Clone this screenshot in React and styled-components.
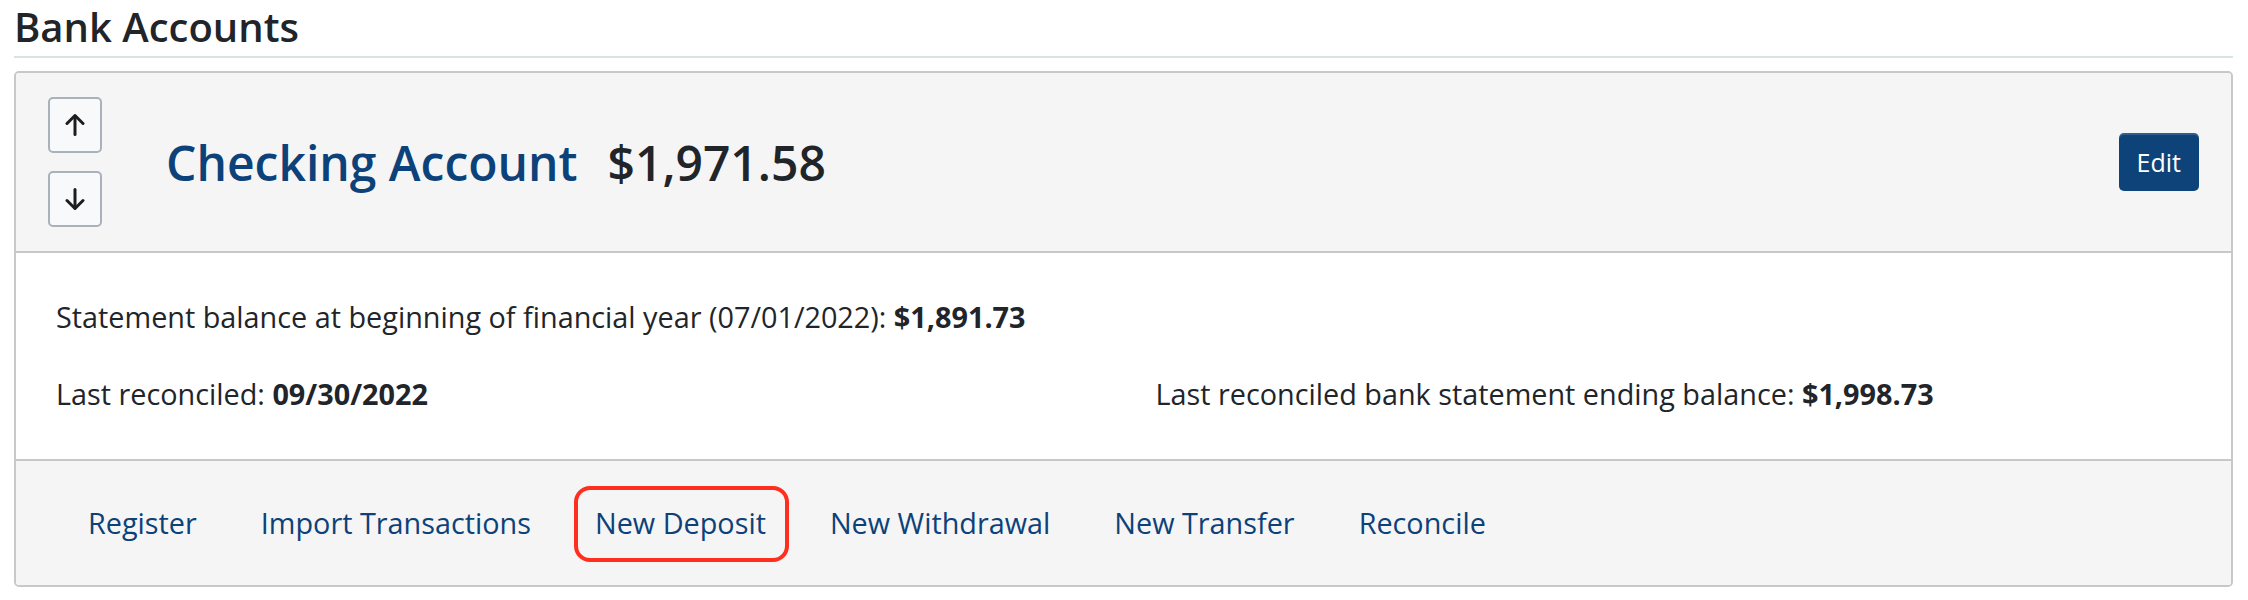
import styled, { createGlobalStyle } from "styled-components";

const Global = createGlobalStyle`
  body {
    margin: 0;
    background: #fff;
    font-family: "Open Sans", "Noto Sans", sans-serif;
    color: #212529;
  }
`;

const Page = styled.div`
  padding: 0 15px 0 14px;
`;

const Heading = styled.h2`
  margin: 0 0 13px 0;
  padding: 3px 0 5px 0;
  font-size: 40px;
  line-height: 48px;
  font-weight: 600;
  color: #212529;
  border-bottom: 2px solid #d6e6dd;
`;

const Card = styled.section`
  border: 2px solid #c8c8c8;
  border-radius: 5px;
  overflow: hidden;
`;

const Header = styled.div`
  display: flex;
  align-items: center;
  padding: 24px 32px 24px 32px;
  background: #f5f5f5;
  border-bottom: 2px solid #c8c8c8;
`;

const Movers = styled.div`
  display: flex;
  flex-direction: column;
  gap: 18px;
`;

const MoveButton = styled.button`
  width: 54px;
  height: 56px;
  display: flex;
  align-items: center;
  justify-content: center;
  padding: 0;
  background: #f8f9fa;
  border: 2px solid #a9b1ba;
  border-radius: 5px;
  color: #1b1e21;
  cursor: pointer;
`;

const Name = styled.a`
  margin-left: 64px;
  font-size: 48px;
  font-weight: 600;
  color: #0c4279;
  text-decoration: none;
`;

const Amount = styled.span`
  margin-left: 30px;
  font-size: 48px;
  font-weight: 600;
  color: #212529;
`;

const EditButton = styled.button`
  margin-left: auto;
  height: 58px;
  padding: 0 18px;
  display: inline-flex;
  align-items: center;
  background: #0e4379;
  color: #fff;
  border: none;
  border-radius: 5px;
  box-shadow: inset 0 2px 0 rgba(255, 255, 255, 0.15);
  font-family: inherit;
  font-size: 25px;
  cursor: pointer;
`;

const Body = styled.div`
  display: grid;
  grid-template-columns: 1fr 1fr;
  column-gap: 64px;
  row-gap: 34px;
  padding: 42px 40px 44px;
  background: #fff;
  font-size: 28.8px;
  line-height: 43px;
`;

const Line = styled.div`
  grid-column: ${(p) => (p.$wide ? "1 / -1" : "auto")};
  white-space: nowrap;

  b {
    font-weight: 700;
  }
`;

const Footer = styled.nav`
  display: flex;
  padding: 41px 40px;
  background: #f5f5f5;
  border-top: 2px solid #c8c8c8;
`;

const Action = styled.a`
  position: relative;
  display: inline-block;
  padding: 0 32px;
  font-size: 28.8px;
  line-height: 42px;
  color: #0c4279;
  text-decoration: none;

  ${(p) =>
    p.$marked &&
    `
    &::after {
      content: "";
      position: absolute;
      left: 11px;
      right: 9px;
      top: -16px;
      bottom: -18px;
      border: 4px solid #ff2e1f;
      border-radius: 16px;
    }
  `}
`;

const Arrow = ({ down }) => (
  <svg
    width="20"
    height="24"
    viewBox="0 0 20 24"
    fill="none"
    stroke="currentColor"
    strokeWidth="3"
    strokeLinecap="round"
    strokeLinejoin="round"
    style={down ? { transform: "rotate(180deg)" } : undefined}
  >
    <path d="M10 21.5V3" />
    <path d="M2 10.5 10 2.5 18 10.5" />
  </svg>
);

const actions = [
  "Register",
  "Import Transactions",
  "New Deposit",
  "New Withdrawal",
  "New Transfer",
  "Reconcile",
];

export default function App() {
  return (
    <Page>
      <Global />
      <Heading>Bank Accounts</Heading>
      <Card>
        <Header>
          <Movers>
            <MoveButton aria-label="Move up">
              <Arrow />
            </MoveButton>
            <MoveButton aria-label="Move down">
              <Arrow down />
            </MoveButton>
          </Movers>
          <Name href="#account">Checking Account</Name>
          <Amount>$1,971.58</Amount>
          <EditButton>Edit</EditButton>
        </Header>

        <Body>
          <Line $wide>
            Statement balance at beginning of financial year (07/01/2022):{" "}
            <b>$1,891.73</b>
          </Line>
          <Line>
            Last reconciled: <b>09/30/2022</b>
          </Line>
          <Line>
            Last reconciled bank statement ending balance: <b>$1,998.73</b>
          </Line>
        </Body>

        <Footer>
          {actions.map((a) => (
            <Action key={a} href="#" $marked={a === "New Deposit"}>
              {a}
            </Action>
          ))}
        </Footer>
      </Card>
    </Page>
  );
}
